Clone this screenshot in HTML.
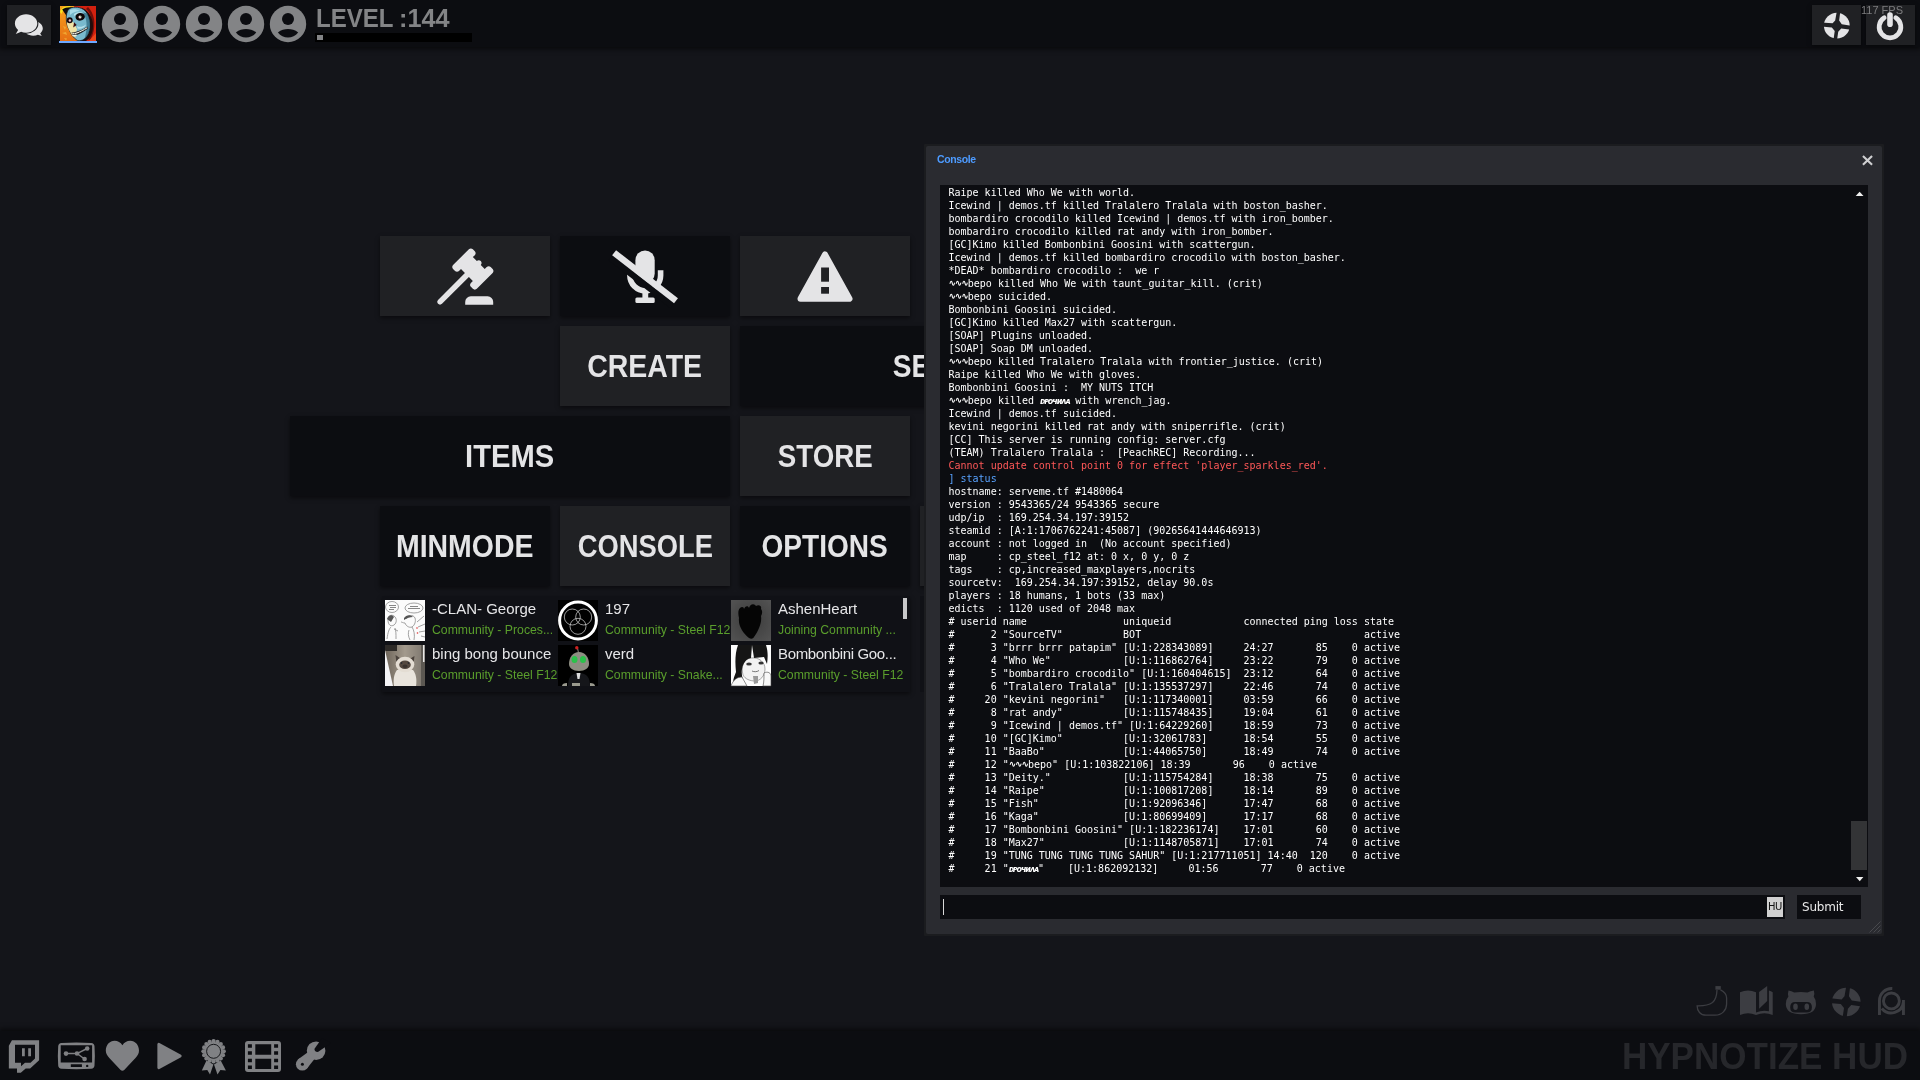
<!DOCTYPE html>
<html lang="en">
<head>
<meta charset="utf-8">
<title>HYPNOTIZE HUD</title>
<style>
*{box-sizing:border-box;margin:0;padding:0}
html,body{width:1920px;height:1080px;overflow:hidden;background:#14151a;font-family:"Liberation Sans",sans-serif;color:#e4e4e6}
#root{position:absolute;left:0;top:0;width:1920px;height:1080px;will-change:transform}
.abs{position:absolute}
.fr{position:absolute;width:173px;height:41px}
.fr svg{left:0;top:0}
.fr b{position:absolute;left:47px;top:0;font-weight:normal;font-size:15px;line-height:18px;color:#e6e6e8;white-space:nowrap}
.fr em{position:absolute;left:47px;top:22.2px;font-style:normal;font-size:12.25px;line-height:16px;color:#5a9e2c;white-space:nowrap}

#top{position:absolute;left:0;top:0;width:1920px;height:47px;background:#0c0d11;box-shadow:0 1px 5px 1px rgba(0,0,0,.6)}
#bot{position:absolute;left:0;top:1031px;width:1920px;height:49px;background:#0c0d11;box-shadow:0 -1px 5px 1px rgba(0,0,0,.6)}
.tb{position:absolute;top:5px;height:40px;background:#202124;box-shadow:0 1px 4px rgba(0,0,0,.5)}
.btn{position:absolute;height:80px;box-shadow:0 2px 4px rgba(0,0,0,.5);text-align:center;font-weight:bold;font-size:30.5px;line-height:80px;color:#e4e4e6;white-space:nowrap;overflow:hidden}
.btn.l{background:#202124}
.btn.d{background:#0c0d11}
.btn span{display:inline-block;transform:scaleX(.9);transform-origin:50% 50%}
svg{position:absolute;overflow:visible}
#log{position:absolute;left:948.5px;top:186.4px;font-family:"DejaVu Sans Mono","Liberation Mono",monospace;font-size:10px;line-height:13px;color:#fff;white-space:pre;margin:0}
#log .red{color:#ff5858}
#log .blu{color:#58a2ff}
#log i{display:inline-block;font-style:normal;font-family:"DejaVu Sans","Liberation Sans",sans-serif;white-space:nowrap;overflow:visible;vertical-align:baseline;line-height:1}
#log i.sq{width:19.3px;font-size:9px;font-weight:bold;letter-spacing:-1.2px;position:relative;top:-1.5px}
#log i.nm{width:29.2px;font-size:8px;font-style:italic;font-weight:bold;letter-spacing:-1.05px}

</style>
</head>
<body>
<div id="root">
<div id="top"></div>
<div id="bot"></div>

<!-- top-left -->
<div class="tb" style="left:7px;width:44px"></div>
<svg class="abs" style="left:60px;top:6px" width="36" height="35" viewBox="0 0 36 35">
<defs><linearGradient id="sk1" x1="0" y1="0" x2="0" y2="1"><stop offset="0" stop-color="#f7a21c"/><stop offset="1" stop-color="#e56f14"/></linearGradient>
<clipPath id="skc"><rect width="36" height="35"/></clipPath></defs>
<g clip-path="url(#skc)">
<rect width="36" height="35" fill="#c8200f"/>
<path d="M0 0H14L22 35H0Z" fill="url(#sk1)"/>
<path d="M0 6C1 2 4 .3 10 0L11 1.500C6 2 3 4 1.500 8Z" fill="#f6e21c"/>
<path d="M17 0C24 1 29 5 31 10C33 16 33 24 30 29L26 35H36V0Z" fill="#d3210f"/>
<path d="M26 3C30 6 32 12 32 18C32 24 30 29 27 33L30 34C34 28 35 20 34 13C33 8 31 4 28 1Z" fill="#6e0f0a"/>
<path d="M2.200 3.500C5 1.500 9 1 13 1.500L8 12Z" fill="#0d0a0c"/>
<path d="M22 2C29 5 33 12 33 20C33 27 30 32 26 35H20Z" fill="#220b0a"/><path d="M29 35L36 27V35Z" fill="#ea441a"/>
<path d="M13.200 1.400C19 .5 25 3 27.100 7.500C29.500 12 30.500 17 29.900 21.400C29.500 26 27.500 30 24.600 32.800C22 34.800 19.500 35 17.300 34.400C13.500 32 11 28.500 9.600 24.600C7.500 21 6.300 17 6.300 13.200C6 9 7 5 9 3C10.200 2 11.700 1.600 13.200 1.400Z" fill="#79b9cd" stroke="#101820" stroke-width=".7"/>
<path d="M27.100 7.500C29.500 12 30.500 17 29.900 21.400C29.500 26 27.500 30 24.600 32.800C26 28 27 22 26.500 17C26.200 13 25 9.500 23 6.500Z" fill="#2f6b82" opacity=".75"/>
<path d="M14 8C16 6 21 5.500 24 7.500C22 7 17 7.500 14 10ZM17 20C19 21.500 23 21 26 18.500C25 21.500 21 23.500 17.500 22.500Z" fill="#c7ebf2" opacity=".8"/>
<path d="M7 15C6.500 19 8.500 23 10.500 26.500C11.500 29 13.500 31 15.500 31.500L17 23L13 16Z" fill="#efe3a6"/>
<path d="M10 4C13 2.500 17 3 20 5C17 5 13 6 10 9Z" fill="#a8dcea"/>
<ellipse cx="20.200" cy="10.800" rx="4.700" ry="3.800" fill="#0c0608" transform="rotate(-8 20.200 10.800)"/>
<circle cx="9.700" cy="14.300" r="3" fill="#15090c"/>
<circle cx="20" cy="11" r="1.500" fill="#f4d9d4"/><circle cx="21" cy="10.500" r=".6" fill="#3fa050"/>
<circle cx="9.900" cy="14.500" r="1.200" fill="#e9b9c0"/>
<path d="M14.100 16.200L16.700 18.900L13.200 21.600Z" fill="#3a0d10"/>
<path d="M11.500 26.500C16 26.500 22 24 27.300 20.500L27.800 22.800C23 26.500 17 29.500 12.800 29.800Z" fill="#1a1518"/>
<path d="M12 27.300C16.500 27 22 24.500 27 21.200L27.300 22.300C22.500 25.600 17 28.300 12.500 28.600Z" fill="#e9ecdf"/>
<path d="M12 29.200L16.500 28.600L16.800 29.800L12.500 30.300Z" fill="#f2f2e6"/>
<path d="M14.500 27.300v1.300M17 26.800v1.300M19.500 26v1.300M22 24.800v1.300M24.500 23.400v1.300" stroke="#2a2a30" stroke-width=".5"/>
<path d="M3 20l3 1-1 3zM2 27l4-1 1 3zM4 32l3 .5-1 2z" fill="#f2b23a" opacity=".8"/>
</g></svg>
<div class="abs" style="left:59px;top:41px;width:38px;height:2px;background:#6ea8ff"></div>

<div class="abs" id="lvl" style="left:315.500px;top:2.900px;transform:scaleX(.925);transform-origin:0 0;font-size:26px;font-weight:bold;color:#838486;line-height:30px;white-space:nowrap">LEVEL</div>
<div class="abs" id="lvl2" style="left:399px;top:2.900px;transform:scaleX(.972);transform-origin:0 0;font-size:26px;font-weight:bold;color:#838486;line-height:30px;white-space:nowrap">:144</div>
<div class="abs" style="left:315px;top:33px;width:157px;height:9px;background:#000"></div>
<div class="abs" style="left:317px;top:35px;width:6px;height:5px;background:#838486"></div>

<!-- top-right -->
<div class="tb" style="left:1812px;width:49px"></div>
<div class="tb" style="left:1866px;width:49px"></div>
<div class="abs" id="fps" style="left:1861px;top:4px;font-size:11px;line-height:12px;color:#7c7c7e;white-space:nowrap">117 FPS</div>

<!-- menu -->
<div class="btn l" style="left:380px;top:236px;width:170px"></div>
<div class="btn d" style="left:560px;top:236px;width:170px"></div>
<div class="btn l" style="left:740px;top:236px;width:170px"></div>
<div class="btn l" style="left:560px;top:326px;width:170px"><span style="transform:scaleX(0.933)">CREATE</span></div>
<div class="btn d" style="left:740px;top:326px;width:440px"><span style="transform:scaleX(0.922)">SERVERS</span></div>
<div class="btn d" style="left:290px;top:416px;width:440px"><span style="transform:scaleX(0.955)">ITEMS</span></div>
<div class="btn l" style="left:740px;top:416px;width:170px"><span style="transform:scaleX(0.908)">STORE</span></div>
<div class="btn d" style="left:380px;top:506px;width:170px"><span style="transform:scaleX(0.933)">MINMODE</span></div>
<div class="btn l" style="left:560px;top:506px;width:170px"><span style="transform:scaleX(0.896)">CONSOLE</span></div>
<div class="btn d" style="left:740px;top:506px;width:170px"><span style="transform:scaleX(0.92)">OPTIONS</span></div>
<div class="btn l" style="left:920px;top:506px;width:170px"></div>

<!-- friends -->
<div class="abs" id="friends" style="left:382px;top:596px;width:528px;height:96px;background:#101116;box-shadow:0 2px 4px rgba(0,0,0,.5)"></div>
<div class="abs" style="left:920px;top:596px;width:170px;height:96px;background:#101116"></div>

<div class="fr" style="left:385px;top:600px"><svg width="40" height="41" viewBox="0 0 40 41"><rect width="40" height="41" fill="#fbfbfb"/>
<g fill="none" stroke="#8a8a8a" stroke-width=".8"><ellipse cx="7" cy="7" rx="6.500" ry="5.500"/><ellipse cx="29" cy="8" rx="9" ry="5"/>
<path d="M2 39c1-7 2-10 4-12M11 39c0-5 0-8-1-11M3 20c0-4 3-6 6-4s3 7 0 9-6 0-6-5zM9 29l4 2M21 19c2-4 7-5 9-1 1 3 0 7-3 9-3 1-6-1-7-4-2 0-3-1-4-1M27 27c2 3 3 8 2 13M24 30c-1 3-1 6 1 10M32 22l7-6M33 27l7-3M34 32l6-1M36 36l4 1"/></g>
<g fill="#555"><path d="M2 19c1-4 5-5 7-2l-3 5zM19 18c2-3 6-4 9-1-3 0-6 1-9 3z"/><path d="M4 5h7v1H4zM5 7h6v1H5zM4 9h5v1H4zM25 6h8v1h-8zM23 8h12v1H23z" opacity=".7"/></g>
<g fill="#d33"><circle cx="32" cy="28" r=".8"/><circle cx="32.500" cy="33" r=".8"/></g></svg><b>-CLAN- George</b><em>Community - Proces...</em></div>
<div class="fr" style="left:558px;top:600px"><svg width="40" height="41" viewBox="0 0 40 41"><rect width="40" height="41" fill="#000"/><circle cx="20" cy="20.500" r="18.400" fill="none" stroke="#fff" stroke-width="3"/>
<g fill="none" stroke="#d8d8d8" stroke-width=".7"><circle cx="14.300" cy="17" r="8"/><circle cx="25.700" cy="17" r="8"/><circle cx="20" cy="26.300" r="8"/></g></svg><b>197</b><em>Community - Steel F12</em></div>
<div class="fr" style="left:731px;top:600px"><svg width="40" height="41" viewBox="0 0 40 41"><defs><radialGradient id="g3" cx=".5" cy=".5" r=".75"><stop offset="0" stop-color="#3a3a3a"/><stop offset="1" stop-color="#555"/></radialGradient></defs><rect width="40" height="41" fill="url(#g3)"/>
<path d="M9 8c2-2 4-1 4 1 1-3 4-4 5-1 1-4 5-5 7-2 3-2 6 0 5 3 2 2 1 5 0 7 1 6-2 14-7 21-1 2-3 2-5 1C12 33 7 26 8 18c-1-4-1-8 1-10z" fill="#050505"/></svg><b>AshenHeart</b><em>Joining Community ...</em></div>
<div class="fr" style="left:385px;top:645px"><svg width="40" height="41" viewBox="0 0 40 41"><defs><linearGradient id="g4" x1="0" x2="1"><stop offset="0" stop-color="#6e655a"/><stop offset=".5" stop-color="#a39a8d"/><stop offset="1" stop-color="#7b756d"/></linearGradient></defs><rect width="40" height="41" fill="url(#g4)"/>
<rect x="0" y="0" width="12" height="6" fill="#2d2a27"/><path d="M0 5l8 36H0z" fill="#f4f4f6"/><rect x="36" y="0" width="4" height="41" fill="#5c5852"/><rect x="38" y="0" width="1.500" height="17" fill="#e8e8e8"/>
<path d="M9 41c-1-7 0-12 3-16h16c3 4 4 9 3 16z" fill="#e9e4dc"/>
<path d="M10.500 10l5 3.500-4 5zM29.500 11l-5 3 4 5z" fill="#4a423c"/>
<ellipse cx="20" cy="19.500" rx="9.300" ry="7.800" fill="#e4ddd3"/>
<ellipse cx="20" cy="19.800" rx="5.800" ry="4.300" fill="#54483f"/><ellipse cx="20" cy="21.300" rx="2.600" ry="1.800" fill="#3a322e"/>
<circle cx="16.500" cy="18" r=".9" fill="#2a2a30"/><circle cx="23.500" cy="18" r=".9" fill="#2a2a30"/></svg><b>bing bong bounce</b><em>Community - Steel F12</em></div>
<div class="fr" style="left:558px;top:645px"><svg width="40" height="41" viewBox="0 0 40 41"><rect width="40" height="41" fill="#000"/>
<path d="M20.500 8L19.500 3" stroke="#8a8a80" stroke-width="1"/><circle cx="18.800" cy="2.800" r="1.700" fill="#c22"/>
<path d="M11 19c0-7 4-12 10-12s10 5 10 12c0 4-4 7-10 7s-10-3-10-7z" fill="#8e8e82"/>
<ellipse cx="16.500" cy="14.500" rx="3" ry="3.600" fill="#2bc24a"/><ellipse cx="25" cy="14.500" rx="3" ry="3.600" fill="#2bc24a"/>
<path d="M10 41c0-8 3-13 11-13s11 5 11 13z" fill="#15161a"/><path d="M18.500 28h4l-1 6h-2z" fill="#ddd"/><path d="M4 41c0-2 2-3 5-3v3zM32 38c3 0 5 1 5 3h-5zM14 41v-3h8v3z" fill="#9a9a8e"/></svg><b>verd</b><em>Community - Snake...</em></div>
<div class="fr" style="left:731px;top:645px"><svg width="40" height="41" viewBox="0 0 40 41"><rect width="40" height="41" fill="#fdfdfd"/>
<path d="M12 30c-2-8 0-16 8-17s14 4 14 11-5 12-10 12-10-2-12-6z" fill="#f2f2f2" stroke="#555" stroke-width=".5"/>
<path d="M7 0h28c2 6 2 12 1 19l-3-7-10 1-2-13-1 13c-5 1-8 5-9 11-1 6 1 11 3 17H3c-2-4 0-9 2-14C4 18 4 8 7 0z" fill="#151515"/>
<path d="M0 41c2-6 6-9 11-9l5 9zM33 28c4-2 7 0 7 3v10h-8c1-4 1-8 1-13z" fill="#f8f8f8" stroke="#444" stroke-width=".6"/>
<g fill="#333"><ellipse cx="18" cy="19" rx="2.800" ry="1.600"/><ellipse cx="30" cy="18" rx="2.600" ry="1.500"/></g><path d="M21 26c2 1 5 1 7-.500" stroke="#444" stroke-width=".7" fill="none"/>
<path d="M22 31l1 8 4-1 0-7z" fill="#999"/></svg><b style="letter-spacing:-.35px">Bombonbini Goo...</b><em>Community - Steel F12</em></div>
<div class="abs" style="left:903px;top:598px;width:4px;height:21px;background:#c8c8ca"></div>
<!-- console -->
<div class="abs" id="con" style="left:924px;top:144px;width:960px;height:792px;background:#1b1c1f;border-radius:1px"></div>
<div class="abs" style="left:926px;top:146px;width:956px;height:788px;background:#2a2b30;border-radius:2px"></div>
<div class="abs" style="left:940px;top:185px;width:928px;height:702px;background:#0c0d11"></div>
<div class="abs" style="left:940px;top:895px;width:845px;height:24px;background:#0c0d11"></div>
<div class="abs" style="left:1797px;top:895px;width:64px;height:24px;background:#0c0d11"></div>

<div class="abs" id="ctitle" style="left:937px;top:153px;font-size:10.5px;line-height:13px;font-weight:bold;color:#4d9bff;letter-spacing:-.38px;white-space:nowrap">Console</div>
<div class="abs" style="left:1851px;top:821px;width:16px;height:49px;background:#333436"></div>
<div class="abs" style="left:943px;top:899px;width:1px;height:16px;background:#d8d8d8"></div>
<div class="abs" id="hu" style="left:1767px;top:897px;width:16px;height:20px;background:#d0d0d0;color:#111;font-family:'DejaVu Sans','Liberation Sans',sans-serif;font-size:10px;line-height:19px;text-align:center;letter-spacing:-.3px">HU</div>
<div class="abs" id="submit" style="left:1802px;top:899px;letter-spacing:-.2px;font-family:'DejaVu Sans','Liberation Sans',sans-serif;font-size:12px;line-height:16px;color:#e8e8e8;white-space:nowrap">Submit</div>
<pre id="log">Raipe killed Who We with world.
Icewind | demos.tf killed Tralalero Tralala with boston_basher.
bombardiro crocodilo killed Icewind | demos.tf with iron_bomber.
bombardiro crocodilo killed rat andy with iron_bomber.
[GC]Kimo killed Bombonbini Goosini with scattergun.
Icewind | demos.tf killed bombardiro crocodilo with boston_basher.
*DEAD* bombardiro crocodilo :  we r
<i class="sq">∿∿∿</i>bepo killed Who We with taunt_guitar_kill. (crit)
<i class="sq">∿∿∿</i>bepo suicided.
Bombonbini Goosini suicided.
[GC]Kimo killed Max27 with scattergun.
[SOAP] Plugins unloaded.
[SOAP] Soap DM unloaded.
<i class="sq">∿∿∿</i>bepo killed Tralalero Tralala with frontier_justice. (crit)
Raipe killed Who We with gloves.
Bombonbini Goosini :  MY NUTS ITCH
<i class="sq">∿∿∿</i>bepo killed <i class="nm">ᴅᴩᴏчᴎᴧᴀ</i> with wrench_jag.
Icewind | demos.tf suicided.
kevini negorini killed rat andy with sniperrifle. (crit)
[CC] This server is running config: server.cfg
(TEAM) Tralalero Tralala :  [PeachREC] Recording...
<span class="red">Cannot update control point 0 for effect 'player_sparkles_red'.</span>
<span class="blu">] status</span>
hostname: serveme.tf #1480064
version : 9543365/24 9543365 secure
udp/ip  : 169.254.34.197:39152
steamid : [A:1:1706762241:45087] (90265641444646913)
account : not logged in  (No account specified)
map     : cp_steel_f12 at: 0 x, 0 y, 0 z
tags    : cp,increased_maxplayers,nocrits
sourcetv:  169.254.34.197:39152, delay 90.0s
players : 18 humans, 1 bots (33 max)
edicts  : 1120 used of 2048 max
# userid name                uniqueid            connected ping loss state
#      2 "SourceTV"          BOT                                     active
#      3 "brrr brrr patapim" [U:1:228343089]     24:27       85    0 active
#      4 "Who We"            [U:1:116862764]     23:22       79    0 active
#      5 "bombardiro crocodilo" [U:1:160404615]  23:12       64    0 active
#      6 "Tralalero Tralala" [U:1:135537297]     22:46       74    0 active
#     20 "kevini negorini"   [U:1:117340001]     03:59       66    0 active
#      8 "rat andy"          [U:1:115748435]     19:04       61    0 active
#      9 "Icewind | demos.tf" [U:1:64229260]     18:59       73    0 active
#     10 "[GC]Kimo"          [U:1:32061783]      18:54       55    0 active
#     11 "BaaBo"             [U:1:44065750]      18:49       74    0 active
#     12 "<i class="sq">∿∿∿</i>bepo" [U:1:103822106] 18:39       96    0 active
#     13 "Deity."            [U:1:115754284]     18:38       75    0 active
#     14 "Raipe"             [U:1:100817208]     18:14       89    0 active
#     15 "Fish"              [U:1:92096346]      17:47       68    0 active
#     16 "Kaga"              [U:1:80699409]      17:17       68    0 active
#     17 "Bombonbini Goosini" [U:1:182236174]    17:01       60    0 active
#     18 "Max27"             [U:1:1148705871]    17:01       74    0 active
#     19 "TUNG TUNG TUNG TUNG SAHUR" [U:1:217711051] 14:40  120    0 active
#     21 "<i class="nm">ᴅᴩᴏчᴎᴧᴀ</i>"    [U:1:862092132]     01:56       77    0 active</pre>
<div class="abs" id="brand" style="right:11.500px;top:1036.8px;transform:scaleX(.973);transform-origin:100% 0;font-size:36px;font-weight:bold;color:#26272b;line-height:40px;white-space:nowrap">HYPNOTIZE HUD</div>

<svg id="ico" style="left:0;top:0" width="1920" height="1080" viewBox="0 0 1920 1080">
<!-- chat -->
<g fill="#e4e4e6">
<path d="M42.8 28.3c0 2-1 3.8-2.6 5.1l1.6 2.6-3.9-1.2c-1.4.6-3 .9-4.7.9-5.3 0-9.6-3.3-9.6-7.4s4.3-7.4 9.6-7.4 9.6 3.3 9.6 7.400z"/>
<path d="M26.100 14.300c6.200 0 11.200 4.100 11.200 9.200s-5 9.200-11.200 9.200c-1.800 0-3.500-.3-5-.9l-5.300 2.200 2.300-4c-2-1.700-3.200-4-3.200-6.500 0-5.100 5-9.200 11.200-9.200z" stroke="#202124" stroke-width="2.200" paint-order="stroke"/>
</g>
<!-- friend placeholders -->
<g id="ph">
<circle cx="120" cy="24" r="18.200" fill="#838486"/>
<circle cx="120" cy="18.900" r="6" fill="#0c0d11"/>
<path d="M109.900 32.500C113 29.600 116.500 29 120 29s7 .6 10.200 3.500C127.500 36 124 37.500 120 37.500s-7.500-1.500-10.100-5z" fill="#0c0d11"/>
</g>
<use href="#ph" x="42"/><use href="#ph" x="84"/><use href="#ph" x="126"/><use href="#ph" x="168"/>
<!-- tf logo -->
<g transform="translate(1836.800 25.700)">
<circle r="12.900" fill="#e4e4e6"/>
<use href="#tfx" transform="scale(.9)" fill="#202124"/>
</g>
<!-- power -->
<g fill="none" stroke="#e4e4e6" stroke-linecap="round">
<path d="M1884.200 17.800A10.850 10.850 0 1 0 1895.800 17.800" stroke-width="4.700"/>
<path d="M1890 15.100V24.300" stroke-width="5.600"/>
</g>
<!-- gavel -->
<g transform="translate(431.600 243.100) scale(2.800)" fill="#e4e4e6">
<path d="M2.300 20.280L11.900 10.680L10.500 9.260L9.780 9.970C9.390 10.360 8.760 10.360 8.370 9.970L7.660 9.260C7.270 8.870 7.270 8.240 7.660 7.850L13.320 2.190C13.710 1.800 14.340 1.800 14.730 2.190L15.440 2.900C15.830 3.290 15.830 3.920 15.440 4.310L14.730 5L16.150 6.430C16.540 6.040 17.170 6.040 17.560 6.430C17.950 6.820 17.950 7.460 17.560 7.850L18.970 9.260L19.680 8.550C20.070 8.160 20.710 8.160 21.100 8.550L21.800 9.260C22.190 9.650 22.190 10.290 21.800 10.680L16.150 16.330C15.760 16.720 15.120 16.720 14.730 16.330L14.030 15.630C13.630 15.240 13.630 14.600 14.030 14.210L14.730 13.500L13.320 12.090L3.710 21.700C3.320 22.090 2.690 22.090 2.300 21.700C1.910 21.310 1.910 20.670 2.300 20.280M20 19A2 2 0 0 1 22 21V22H12V21A2 2 0 0 1 14 19H20Z"/>
</g>
<!-- mic off -->
<g fill="#e4e4e6">
<rect x="635.400" y="250.500" width="19.300" height="33" rx="9.650"/>
<path d="M629.900 270.300v5.200a15.350 15.350 0 0 0 30.700 0v-5.200" fill="none" stroke="#e4e4e6" stroke-width="5.600" stroke-linecap="butt"/>
<rect x="642.400" y="291" width="5.800" height="8"/>
<rect x="635.400" y="297.400" width="19.300" height="5.600" rx="1.500"/>
<path d="M610.400 257.600L672.300 305.600" stroke="#0c0d11" stroke-width="6.500" fill="none"/>
<path d="M614.100 252.700L676 300.700" stroke="#e4e4e6" stroke-width="6.400" fill="none"/>
</g>
<!-- warning -->
<path d="M825 254.500L849.500 298.800H800.500Z" fill="#e4e4e6" stroke="#e4e4e6" stroke-width="6" stroke-linejoin="round"/>
<rect x="821.100" y="267.500" width="7.900" height="14.200" fill="#202124"/>
<rect x="821.100" y="287" width="7.900" height="6.700" fill="#202124"/>
<!-- console widgets -->
<path d="M1863.700 156.700L1871.300 164.100M1871.300 156.700L1863.700 164.100" stroke="#cfcfd1" stroke-width="2.100" stroke-linecap="square" fill="none"/>
<path d="M1855.700 196h7.800l-3.900-4.200z" fill="#f0f0f0"/>
<path d="M1856 877h7.400l-3.700 4.300z" fill="#f0f0f0"/>
<path d="M1869.500 932.500l11-11M1873.500 932.500l7-7M1877.500 932.500l3-3" stroke="#48494d" stroke-width="1" fill="none"/>
<!-- bottom-left icons -->
<g fill="#808184">
<path fill-rule="evenodd" d="M11.950 1040.200H39.100V1060.300L30.100 1068.500H25.700L20.800 1072.700H17V1068.500H8.850V1045.700ZM15 1044.800V1062.800H21V1066.300L25 1062.800H30.500L35 1058.500V1044.800ZM22 1048.200h2.800v8.100H22zM28.200 1048.200h2.800v8.100h-2.800z"/>
<path fill-rule="evenodd" d="M61.500 1042.900Q76.350 1041.900 91.200 1042.900Q94.300 1043.100 94.500 1046.200Q95.200 1055.850 94.500 1065.500Q94.300 1068.600 91.200 1068.800Q76.350 1069.600 61.500 1068.800Q58.400 1068.600 58.200 1065.500Q57.500 1055.850 58.200 1046.200Q58.400 1043.100 61.500 1042.900ZM60.700 1045.200V1062.500H92.100V1045.200ZM70.800 1064.300v2.600h11.100v-2.600zM86 1065.900a1.200 1.200 0 1 0 2.400 0a1.200 1.200 0 1 0 -2.400 0z"/>
<circle cx="66" cy="1053.600" r="2.300"/><circle cx="77" cy="1053.500" r="2.300"/><circle cx="87.200" cy="1048.500" r="2.300"/><circle cx="84.600" cy="1059" r="2.300"/>
<path d="M66 1053.600H77L87.200 1048.500M77 1053.500L84.600 1059" fill="none" stroke="#808184" stroke-width="1.500"/>
<path d="M122.400 1070.700c-.700 0-1.300-.300-1.800-.800l-11.300-11.900c-2-2.100-3.500-4.500-3.500-7.500 0-5.400 3.800-9.700 8.800-9.700 3.200 0 6 1.700 7.800 4.400 1.800-2.700 4.600-4.400 7.800-4.400 5 0 8.800 4.300 8.800 9.700 0 3-1.500 5.400-3.500 7.500l-11.300 11.900c-.500.500-1.100.800-1.800.800z"/>
<path d="M159.400 1042.900L181 1054.700Q182.600 1056 181 1057.300L159.400 1069.100Q157.400 1069.800 157.400 1067.600V1044.400Q157.400 1042.200 159.400 1042.900Z"/>
<circle cx="223.80" cy="1051.30" r="2.1"/><circle cx="223.02" cy="1055.20" r="2.1"/><circle cx="220.81" cy="1058.51" r="2.1"/><circle cx="217.50" cy="1060.72" r="2.1"/><circle cx="213.60" cy="1061.50" r="2.1"/><circle cx="209.70" cy="1060.72" r="2.1"/><circle cx="206.39" cy="1058.51" r="2.1"/><circle cx="204.18" cy="1055.20" r="2.1"/><circle cx="203.40" cy="1051.30" r="2.1"/><circle cx="204.18" cy="1047.40" r="2.1"/><circle cx="206.39" cy="1044.09" r="2.1"/><circle cx="209.70" cy="1041.88" r="2.1"/><circle cx="213.60" cy="1041.10" r="2.1"/><circle cx="217.50" cy="1041.88" r="2.1"/><circle cx="220.81" cy="1044.09" r="2.1"/><circle cx="223.02" cy="1047.40" r="2.1"/><circle cx="213.6" cy="1051.3" r="9.500"/>
<path d="M206.500 1060.500L201.800 1070.500L207.300 1070L210 1074.500L213.400 1064.500ZM220.700 1060.500L225.900 1070.500L220.400 1070L217.500 1074.500L214 1064.500Z"/>
<path fill-rule="evenodd" d="M248 1041H278Q281 1041 281 1044V1069Q281 1072 278 1072H248Q245 1072 245 1069V1044Q245 1041 248 1041ZM255.300 1044.300v10.400h15.900v-10.400zM255.300 1058.700v10.400h15.900v-10.400zM247.900 1044.300v3.500h4v-3.500zM247.900 1051.300v3.400h4v-3.400zM247.900 1058.700v3.500h4v-3.500zM247.900 1065.600v3.500h4v-3.500zM274.100 1044.300v3.500h4v-3.500zM274.100 1051.300v3.400h4v-3.400zM274.100 1058.700v3.500h4v-3.500zM274.100 1065.600v3.500h4v-3.500z"/>
</g>
<circle cx="213.6" cy="1051.3" r="7" fill="none" stroke="#0c0d11" stroke-width=".9"/>
<!-- wrench -->
<g>
<circle cx="302.300" cy="1064.200" r="6.400" fill="#808184"/>
<path d="M306.760 1068.790L316.070 1056.950L309.930 1050.650L297.840 1059.610Z" fill="#808184"/>
<circle cx="316.100" cy="1050.700" r="9.300" fill="#808184"/>
<path d="M314.400 1049L322 1038L331 1043L318.300 1051.800Q315 1052.400 314.400 1049Z" fill="#0c0d11"/>
<circle cx="302.400" cy="1064.300" r="1.500" fill="#0c0d11"/>
</g>
<!-- dim right icons -->
<defs><polygon id="tfx" points="-0.26,-14.50 -1.80,-5.70 -4.70,-2.60 -13.50,-3.40 -15.50,-3.50 -15.50,1.30 -14.30,1.30 -5.50,2.10 -2.30,6.00 -3.40,13.80 -3.50,15.50 0.50,15.50 0.50,14.30 1.60,6.80 4.90,3.10 13.80,4.20 15.50,4.30 15.50,-0.20 14.06,-0.26 5.50,-1.60 2.60,-5.70 3.60,-13.50 3.70,-15.50 -0.20,-15.50"/></defs>
<g fill="#3c3d42">
<rect x="1715.400" y="986.100" width="5.400" height="3.600"/>
<path d="M1720.500 989.800C1724 991.500 1726.600 993.500 1726.600 998V1004C1726.600 1010 1722 1015.200 1715 1015.200H1706C1700.500 1015.200 1697.100 1011 1697.100 1005.800C1704 1006 1709 1005 1712.500 1002.500C1715.500 1000 1716.800 996 1717 990" fill="none" stroke="#3c3d42" stroke-width="1.300"/>
<path d="M1740 992.300Q1748 988.800 1756 992.300V1014.900Q1748 1011.400 1740 1014.900Z"/>
<path d="M1759.100 991.900L1767.200 986.100V1001L1759.100 1008.800Z"/>
<path d="M1768.900 990.600Q1771 991.200 1772.700 992.300V1014.900Q1764.500 1011.400 1756 1014.900V1012.600Q1762 1009.800 1768.900 1011.200Z"/>
<path fill-rule="evenodd" d="M1788.500 990.400Q1791.500 990.700 1794.200 992.600Q1800.800 991.600 1807.400 992.600Q1810.500 990.600 1813.900 990.400Q1814.800 993.500 1813.700 996.500Q1816 999.500 1816 1004Q1816 1014.200 1801 1014.200Q1785.800 1014.200 1785.800 1004Q1785.800 999.500 1788.400 996.500Q1787.500 993.500 1788.500 990.400ZM1795.200 1002Q1790.200 1002 1790.200 1007.200Q1790.200 1012.500 1795.200 1012.500H1806.900Q1811.900 1012.500 1811.900 1007.200Q1811.900 1002 1806.900 1002Z"/>
<ellipse cx="1795.500" cy="1006.800" rx="2.300" ry="3.300"/><ellipse cx="1806.800" cy="1006.800" rx="2.300" ry="3.300"/>
<circle cx="1846.300" cy="1002" r="14.300"/>
</g>
<use href="#tfx" transform="translate(1846.300 1002)" fill="#14151a"/>
<g fill="none" stroke="#3c3d42" stroke-width="2.900">
<circle cx="1891.400" cy="1000.900" r="7.950"/>
<path d="M1879.450 1015V1000.500A12.200 12.200 0 0 1 1892.300 988.500"/>
<path d="M1881.800 1008.500A12.300 12.300 0 0 0 1903.450 1002M1903.450 1015V1000.100"/>
</g>
</svg>
</div>
</body>
</html>
